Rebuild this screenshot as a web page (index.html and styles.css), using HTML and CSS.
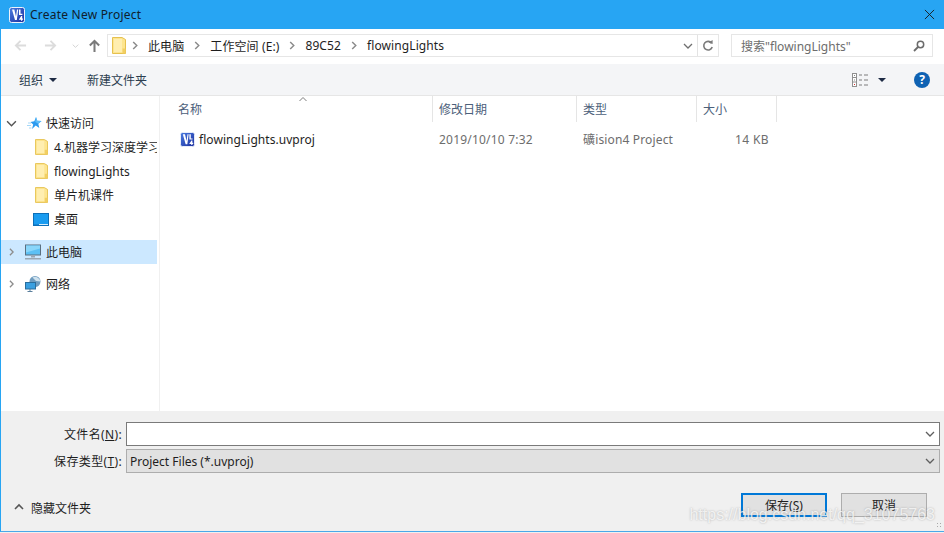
FILE: index.html
```html
<!DOCTYPE html>
<html lang="zh-CN">
<head>
  <meta charset="UTF-8" />
  <title>Create New Project</title>
  <link rel="stylesheet" href="styles.css">
</head>
<body>
  <svg class="defs" width="0" height="0">
    <defs>
      <linearGradient id="keil-fill" x1="0" y1="0" x2="1" y2="1">
        <stop offset="0" stop-color="#4a7be0"/>
        <stop offset="1" stop-color="#1c2f9e"/>
      </linearGradient>
    </defs>
    <symbol id="keil" viewBox="0 0 16 16">
      <rect x="0.5" y="0.5" width="15" height="15" rx="2" fill="url(#keil-fill)" stroke="#eef3fc"/>
      <path d="M3 2.500h2.300l1.700 7 1-7h1.200l-1.400 10.500H6z" fill="#fff"/>
      <path d="M10 2.500h1.500v4.300h1.900v1.300H10z" fill="#fff"/>
      <path d="M9.800 12.700l2.400-3.700h1v2.500h.9v1.200h-.9v1.100h-1.200v-1.100z" fill="#fff"/>
    </symbol>
    <symbol id="folder" viewBox="0 0 14 17">
      <path d="M.5.5h9.500l3.500 2v14H.5z" fill="#fde58f" stroke="#e6c14f"/>
      <path d="M2 2h8v13H2z" fill="#ffeeb0"/>
      <path d="M10.500 11.500h3v5h-3z" fill="#f2cf62"/>
    </symbol>
    <symbol id="chev-right" viewBox="0 0 8 10">
      <path d="M2 1l4 4-4 4" fill="none" stroke="currentColor" stroke-width="1.600"/>
    </symbol>
    <symbol id="chev-down" viewBox="0 0 10 8">
      <path d="M1 2l4 4 4-4" fill="none" stroke="currentColor" stroke-width="1.300"/>
    </symbol>
    <symbol id="arrow" viewBox="0 0 14 14">
      <path d="M13 7H2M7 2L2 7l5 5" fill="none" stroke="currentColor" stroke-width="2"/>
    </symbol>
  </svg>

  <div class="window">
    <header class="titlebar">
      <svg class="title-icon"><use href="#keil"/></svg>
      <span class="title-text">Create New Project</span>
      <svg class="close" viewBox="0 0 12 12"><path d="M1 1l10 10M11 1L1 11" stroke="#1a1a1a" stroke-width="1" fill="none"/></svg>
    </header>

    <div class="navbar">
      <div class="nav-buttons">
        <svg class="nav-back"><use href="#arrow"/></svg>
        <svg class="nav-forward"><use href="#arrow"/></svg>
        <svg class="nav-recent"><use href="#chev-down"/></svg>
        <svg class="nav-up" viewBox="0 0 14 14"><path d="M7 14V2M2 7l5-5 5 5" fill="none" stroke="currentColor" stroke-width="2.200"/></svg>
      </div>
      <div class="address">
        <svg class="address-folder"><use href="#folder"/></svg>
        <svg class="crumb-sep"><use href="#chev-right"/></svg>
        <span class="crumb">此电脑</span>
        <svg class="crumb-sep"><use href="#chev-right"/></svg>
        <span class="crumb">工作空间 (E:)</span>
        <svg class="crumb-sep"><use href="#chev-right"/></svg>
        <span class="crumb">89C52</span>
        <svg class="crumb-sep"><use href="#chev-right"/></svg>
        <span class="crumb">flowingLights</span>
        <svg class="address-drop"><use href="#chev-down"/></svg>
        <span class="address-refresh">
          <svg viewBox="0 0 12 13"><path d="M9.600 4.200A4.300 4.300 0 1 0 10.200 8" fill="none" stroke="#7b7b7b" stroke-width="1.600"/><path d="M6.600 3.600L10.600 5V1z" fill="#7b7b7b"/></svg>
        </span>
      </div>
      <div class="search">
        <span class="search-text">搜索"flowingLights"</span>
        <svg viewBox="0 0 12 12"><circle cx="7.500" cy="4.500" r="3.200" fill="none" stroke="#6b6b6b" stroke-width="1.500"/><path d="M5 7l-4 4" stroke="#6b6b6b" stroke-width="1.800"/></svg>
      </div>
    </div>

    <div class="toolbar">
      <span class="tool">组织</span>
      <span class="caret"></span>
      <span class="tool new-folder">新建文件夹</span>
      <svg class="view-icon" viewBox="0 0 16 14">
        <rect x="0.500" y="0.500" width="4" height="13" fill="#fff" stroke="#8f8f8f"/>
        <path d="M1 4.500h3M1 9h3" stroke="#8f8f8f"/>
        <path d="M2 2.500h1M2 7h1" stroke="#888"/>
        <path d="M2 11.500h1" stroke="#d33"/>
        <path d="M7 2h3M12 2h4M7 7h3M12 7h4M7 12h3M12 12h4" stroke="#7d7d7d"/>
      </svg>
      <span class="caret view-caret"></span>
      <span class="help">?</span>
    </div>

    <div class="body">
      <nav class="sidebar">
        <div class="tree-row tree-top">
          <svg class="twisty twisty-open"><use href="#chev-down"/></svg>
          <svg class="tree-icon star-icon" viewBox="0 0 15 14">
            <path d="M9 1l1.200 3.800L14.500 5l-3.200 2.700 1 4.300-3.600-2.400L5 13l1.200-4.600L3.500 6l3.800-.8z" fill="#2b9af0"/>
            <path d="M9 1l1.200 3.800L14.500 5l-3.200 2.700-3-1.700z" fill="#5fbdf7"/>
            <path d="M1 7h3M0 9.500h4M2 12h2.500" stroke="#a6d8f8"/>
          </svg>
          <span>快速访问</span>
        </div>
        <div class="tree-row tree-child">
          <svg class="tree-icon folder-icon"><use href="#folder"/></svg>
          <span>4.机器学习深度学习</span>
        </div>
        <div class="tree-row tree-child">
          <svg class="tree-icon folder-icon"><use href="#folder"/></svg>
          <span>flowingLights</span>
        </div>
        <div class="tree-row tree-child">
          <svg class="tree-icon folder-icon"><use href="#folder"/></svg>
          <span>单片机课件</span>
        </div>
        <div class="tree-row tree-child">
          <svg class="tree-icon desktop-icon" viewBox="0 0 16 13"><rect width="16" height="13" fill="#0d6fb8"/><rect x="1" y="1" width="14" height="10.500" fill="#1a9cf0"/><path d="M6 11h9v1H6z" fill="#d9eefc"/></svg>
          <span>桌面</span>
        </div>
        <div class="tree-row tree-selected">
          <svg class="twisty"><use href="#chev-right"/></svg>
          <svg class="tree-icon pc-icon" viewBox="0 0 16 15"><rect x="0.500" y="0.500" width="15" height="10" fill="#5cc0f4" stroke="#5a6f80"/><path d="M1 1h14v3L1 8z" fill="#8ad6fa"/><path d="M6 11h4v2H6z" fill="#9aa7b2"/><path d="M0 13.500h16V15H0z" fill="#9aa7b2"/></svg>
          <span>此电脑</span>
        </div>
        <div class="tree-row tree-network">
          <svg class="twisty"><use href="#chev-right"/></svg>
          <svg class="tree-icon pc-icon" viewBox="0 0 16 16"><circle cx="10" cy="5.500" r="5.500" fill="#6f9cbf"/><path d="M7.500 1.500a5.500 5.500 0 0 1 8 4L11 5z" fill="#cfe2ee"/><rect x="0.500" y="6.500" width="10" height="6.500" fill="#3a9fe0" stroke="#2a6d9c"/><path d="M5 13v2M2.500 15.500h5" stroke="#5a7f9c"/></svg>
          <span>网络</span>
        </div>
      </nav>

      <main class="files">
        <div class="file-head">
          <div class="col col-name">名称
            <svg class="sort-arrow" viewBox="0 0 8 4"><path d="M.5 4L4 .5 7.500 4" fill="none" stroke="#7d7d7d"/></svg>
          </div>
          <div class="col col-date">修改日期</div>
          <div class="col col-type">类型</div>
          <div class="col col-size">大小</div>
        </div>
        <div class="file-row">
          <div class="cell cell-name">
            <svg class="file-icon"><use href="#keil"/></svg>
            flowingLights.uvproj
          </div>
          <div class="cell cell-date">2019/10/10 7:32</div>
          <div class="cell cell-type">礦ision4 Project</div>
          <div class="cell cell-size">14 KB</div>
        </div>
      </main>
    </div>

    <footer class="footer">
      <div class="form-row">
        <label class="form-label">文件名(<u>N</u>):</label>
        <div class="combo">
          <svg><use href="#chev-down"/></svg>
        </div>
      </div>
      <div class="form-row">
        <label class="form-label">保存类型(<u>T</u>):</label>
        <div class="combo combo-type">
          <span>Project Files (*.uvproj)</span>
          <svg><use href="#chev-down"/></svg>
        </div>
      </div>
      <div class="actions">
        <svg class="hide-arrow" viewBox="0 0 10 8"><path d="M1 6l4-4 4 4" fill="none" stroke="#555" stroke-width="1.600"/></svg>
        <span class="hide-text">隐藏文件夹</span>
        <button class="btn btn-default">保存(<u>S</u>)</button>
        <button class="btn">取消</button>
      </div>
    </footer>

    <div class="grip"></div>
    <div class="watermark">https://blog.csdn.net/qq_31075763</div>
  </div>
</body>
</html>
```

FILE: styles.css
```css
* {
  box-sizing: border-box;
}
html, body {
  margin: 0;
  height: 100%;
  overflow: hidden;
  background: #f0f0f0;
}
body {
  font-family: "Noto Sans", "Noto Sans CJK SC", sans-serif;
  font-size: 12px;
  color: #1e1e1e;
}
.defs {
  position: absolute;
}
svg {
  display: block;
  flex: none;
}

.window {
  position: relative;
  width: 944px;
  height: 532px;
  display: flex;
  flex-direction: column;
  border-left: 1px solid #27a5f3;
  border-bottom: 1px solid #4aa8e8;
  background: #fff;
}

/* title bar */
.titlebar {
  height: 29px;
  flex: none;
  margin-left: -1px;
  padding: 0 9px 0 9px;
  display: flex;
  align-items: center;
  background: #27a5f3;
}
.title-icon {
  width: 16px;
  height: 16px;
}
.title-text {
  margin-left: 5px;
  font-size: 12px;
  letter-spacing: 0.22px;
  color: #10202c;
}
.close {
  width: 11px;
  height: 11px;
  margin-left: auto;
}

/* back / forward and address */
.navbar {
  height: 35px;
  flex: none;
  display: flex;
  align-items: center;
  padding-bottom: 2px;
}
.nav-buttons {
  width: 106px;
  display: flex;
  align-items: center;
  flex: none;
}
.nav-buttons svg {
  width: 13px;
  height: 13px;
}
.nav-back {
  margin-left: 13px;
  color: #dcdcdc;
}
.nav-forward {
  margin-left: 17px;
  color: #dcdcdc;
  transform: scaleX(-1);
}
.nav-buttons .nav-recent {
  margin-left: 15px;
  width: 7px;
  height: 6px;
  color: #d0d0d0;
}
.nav-up {
  margin-left: 9px;
  color: #7b7b7b;
}
.address {
  width: 612px;
  height: 23px;
  display: flex;
  align-items: center;
  border: 1px solid #e3e3e3;
  padding-left: 4px;
  outline: 1px solid #e6e6e6;
  outline-offset: -1px;
}
.address-folder {
  width: 14px;
  height: 17px;
}
.crumb-sep {
  width: 8px;
  height: 9px;
  margin: 0 9px 0 6px;
  color: #8a8a8a;
}
.address-folder + .crumb-sep {
  margin-left: 5px;
}
.crumb {
  margin-right: 3px;
  letter-spacing: 0.1px;
  color: #1e1e1e;
  white-space: nowrap;
}
.address-drop {
  width: 10px;
  height: 8px;
  margin-left: auto;
  margin-right: 4px;
  color: #6f6f6f;
}
.address-refresh {
  width: 21px;
  height: 21px;
  display: flex;
  align-items: center;
  justify-content: center;
  border-left: 1px solid #e3e3e3;
}
.address-refresh svg {
  width: 12px;
  height: 13px;
}
.search {
  width: 202px;
  height: 23px;
  margin-left: 12px;
  padding: 0 7px 0 9px;
  display: flex;
  align-items: center;
  justify-content: space-between;
  border: 1px solid #e0e0e0;
  outline: 1px solid #e6e6e6;
  outline-offset: -1px;
  color: #6d6d6d;
}
.search svg {
  width: 12px;
  height: 12px;
}

/* command bar */
.toolbar {
  height: 32px;
  flex: none;
  display: flex;
  align-items: center;
  padding-left: 18px;
  background: #f4f5f7;
  border-bottom: 1px solid #e6e6e6;
}
.tool {
  color: #2c3e50;
}
.caret {
  width: 0;
  height: 0;
  margin-left: 6px;
  border-style: solid;
  border-width: 4px 4px 0;
  border-color: #1d2b44 transparent transparent;
}
.new-folder {
  margin-left: 30px;
}
.view-icon {
  width: 16px;
  height: 14px;
  margin-left: auto;
}
.view-caret {
  margin-left: 10px;
}
.help {
  width: 16px;
  height: 16px;
  margin: 0 14px 0 28px;
  border-radius: 50%;
  background: #0f62b3;
  color: #fff;
  font-weight: 700;
  line-height: 16px;
  text-align: center;
}

/* navigation pane and file list */
.body {
  flex: 1;
  min-height: 0;
  display: flex;
}
.sidebar {
  width: 159px;
  flex: none;
  padding-top: 15px;
  border-right: 1px solid #f0f0f0;
}
.tree-row {
  height: 24px;
  width: 156px;
  display: flex;
  align-items: center;
  overflow: hidden;
  white-space: nowrap;
  color: #1e1e1e;
}
.twisty {
  width: 9px;
  height: 8px;
  margin: 0 8px 0 6px;
  color: #8c8c8c;
}
.twisty-open {
  width: 11px;
  height: 9px;
  margin: 0 10px 0 5px;
  color: #555;
}
.tree-icon {
  width: 16px;
  height: 16px;
  margin-right: 5px;
}
.tree-top .star-icon {
  width: 15px;
  height: 14px;
  margin-right: 4px;
}
.tree-child {
  padding-left: 33px;
}
.folder-icon {
  width: 13px;
  height: 16px;
  margin-left: 1px;
  margin-right: 6px;
}
.desktop-icon {
  width: 16px;
  height: 13px;
  margin-left: -1px;
  margin-right: 5px;
}
.tree-selected {
  margin-top: 9px;
  background: #cce8ff;
}
.tree-selected .twisty,
.tree-network .twisty {
  margin-right: 9px;
}
.pc-icon {
  margin-right: 5px;
}
.tree-network {
  margin-top: 8px;
}

.files {
  flex: 1;
  min-width: 0;
}
.file-head {
  height: 26px;
  display: flex;
}
.col {
  position: relative;
  padding-left: 6px;
  line-height: 28px;
  color: #4c607a;
  border-right: 1px solid #e5e5e5;
}
.col-name {
  width: 273px;
  padding-left: 18px;
}
.col-date {
  width: 144px;
}
.col-type {
  width: 120px;
}
.col-size {
  width: 80px;
}
.sort-arrow {
  position: absolute;
  top: 1px;
  left: 139px;
  width: 8px;
  height: 4px;
}
.file-row {
  display: flex;
  align-items: center;
  height: 24px;
  margin-top: 5px;
}
.cell {
  padding-left: 6px;
  color: #6d6d6d;
  white-space: nowrap;
}
.cell-name {
  width: 273px;
  padding-left: 20px;
  display: flex;
  align-items: center;
  letter-spacing: 0.05px;
  color: #1e1e1e;
}
.file-icon {
  width: 15px;
  height: 15px;
  margin-right: 4px;
}
.cell-date {
  width: 144px;
  letter-spacing: 0.2px;
}
.cell-type {
  width: 120px;
  letter-spacing: 0.15px;
}
.cell-size {
  width: 72px;
  letter-spacing: 0.4px;
  text-align: right;
}

/* file name form */
.footer {
  height: 120px;
  flex: none;
  padding: 11px 4px 0 0;
  background: #f0f0f0;
}
.form-row {
  height: 24px;
  margin-bottom: 3px;
  display: flex;
  align-items: center;
}
.form-label {
  width: 125px;
  padding-right: 4px;
  letter-spacing: 0.35px;
  text-align: right;
  white-space: nowrap;
  color: #1e1e1e;
}
.combo {
  flex: 1;
  height: 24px;
  padding: 0 4px 0 3px;
  display: flex;
  align-items: center;
  justify-content: space-between;
  margin-left: auto;
  background: #fff;
  border: 1px solid #7a7a7a;
}
.combo svg {
  width: 10px;
  height: 8px;
  margin-left: auto;
  color: #5f5f5f;
}
.combo-type {
  background: #e1e1e1;
  border-color: #adadad;
}
.actions {
  display: flex;
  align-items: center;
  margin-top: 20px;
  padding-right: 13px;
}
.hide-arrow {
  width: 10px;
  height: 8px;
  margin: 4px 0 0 13px;
}
.hide-text {
  margin: 5px 0 0 7px;
  color: #1e1e1e;
}
.btn {
  width: 86px;
  height: 24px;
  padding: 0;
  margin-left: 14px;
  font: inherit;
  color: #1e1e1e;
  background: #e1e1e1;
  border: 1px solid #adadad;
}
.btn-default {
  margin-left: auto;
  border: 2px solid #0078d7;
}

/* resize grip in the corner */
.grip {
  position: absolute;
  right: 1px;
  bottom: 2px;
  width: 7px;
  height: 7px;
  background: radial-gradient(circle, #a9a9a9 0.8px, transparent 1px) 0 0 / 3px 3px;
}
.watermark {
  position: absolute;
  right: 9px;
  bottom: 7px;
  font-family: "Liberation Sans", sans-serif;
  font-size: 16px;
  color: rgba(255, 255, 255, 0.75);
  text-shadow: 0 0 2px rgba(120, 120, 120, 0.55);
  white-space: nowrap;
}
```
